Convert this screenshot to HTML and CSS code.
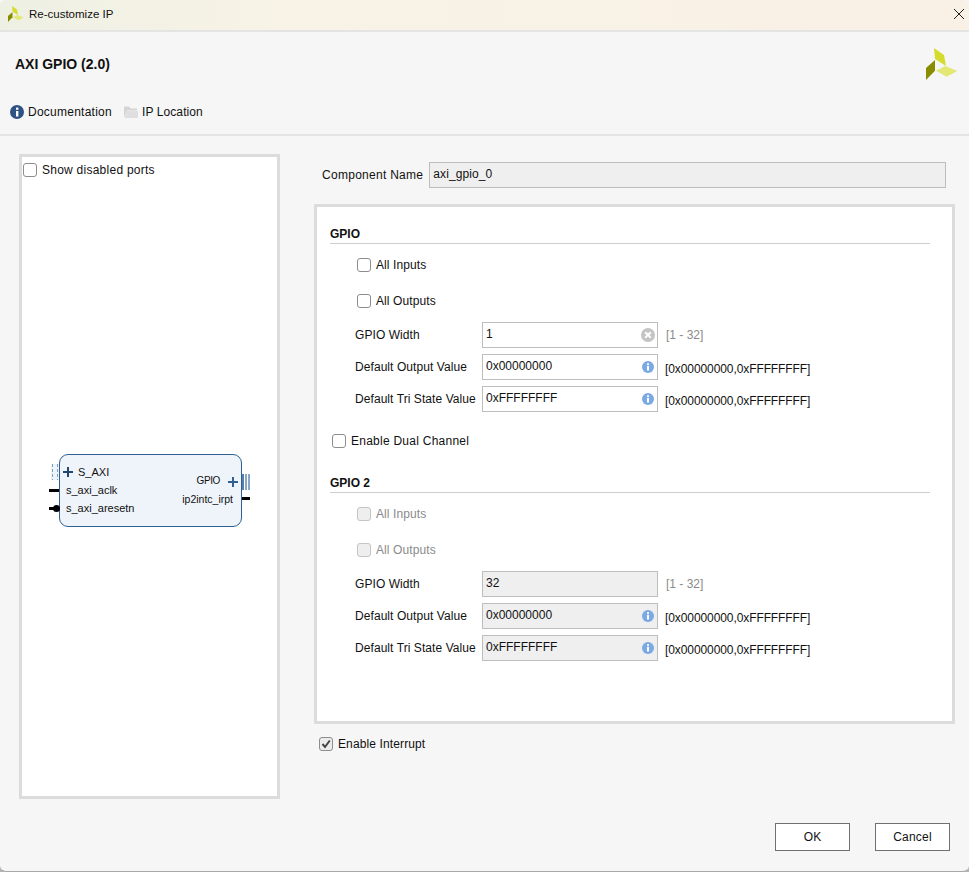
FILE: index.html
```html
<!DOCTYPE html>
<html lang="en">
<head>
<meta charset="utf-8">
<title>Re-customize IP</title>
<link rel="stylesheet" href="styles.css">
</head>
<body>
<div class="dialog">
  <header class="titlebar">
    <svg class="logo-small" viewBox="0 0 32 32"><path d="M8 0 18 7 20 18 9 11Z" fill="#d6dc2e"/><path d="M9 12 9 22.700 0 32 0 20Z" fill="#8a8c00"/><path d="M10 22.700 19.300 18 31.300 23 20.700 28.700Z" fill="#e3e874"/></svg>
    <span class="titlebar-text">Re-customize IP</span>
    <svg class="close" viewBox="0 0 10 10"><path d="M0 0 10 10M10 0 0 10" stroke="#222" stroke-width="1" fill="none"/></svg>
  </header>
  <section class="head">
    <div class="head-top">
      <h1 class="ip-title">AXI GPIO (2.0)</h1>
      <svg class="logo" viewBox="0 0 32 32"><path d="M8 0 18 7 20 18 9 11Z" fill="#d6dc2e"/><path d="M9 12 9 22.700 0 32 0 20Z" fill="#8a8c00"/><path d="M10 22.700 19.300 18 31.300 23 20.700 28.700Z" fill="#e3e874"/></svg>
    </div>
    <nav class="tools">
      <span class="tool">
        <svg class="tool-icon" viewBox="0 0 14 14"><circle cx="7" cy="7" r="7" fill="#2f5184"/><rect x="6" y="6" width="2.400" height="5.500" fill="#fff"/><rect x="6" y="2.600" width="2.400" height="2.200" fill="#fff"/></svg>
        <span class="doc-text">Documentation</span>
      </span>
      <span class="tool">
        <svg class="tool-icon" viewBox="0 0 14 13"><path d="M0 1H5L6.500 3H13V5H3L0 12Z" fill="#d4d4d4"/><path d="M2.500 5.500H14V12.500H0.500Z" fill="#dfdfdf"/></svg>
        <span class="loc-text">IP Location</span>
      </span>
    </nav>
  </section>
  <main class="main">
    <aside class="symbol-panel">
      <label class="check show-ports"><span class="box"></span>Show disabled ports</label>
      <div class="canvas">
        <div class="ip-block"></div>
        <svg class="stub stub-bus-left" viewBox="0 0 8 16"><path d="M1.500 0V16M6.500 0V16" stroke="#7fa1c1" stroke-width="1" stroke-dasharray="3 2" fill="none"/></svg>
        <span class="port-line port-aclk"></span>
        <span class="port-line port-aresetn"></span>
        <span class="port-dot"></span>
        <span class="port-line port-irq"></span>
        <svg class="stub stub-bus-right" viewBox="0 0 8 16"><path d="M1 0V16" stroke="#2f5f93" stroke-width="1.600"/><path d="M4 0V16M7 0V16" stroke="#5f8db5" stroke-width="1.500"/></svg>
        <svg class="plus plus-left" viewBox="0 0 10 10"><path d="M5 0V10M0 5H10" stroke="#23466f" stroke-width="2"/></svg>
        <svg class="plus plus-right" viewBox="0 0 10 10"><path d="M5 0V10M0 5H10" stroke="#2f5f93" stroke-width="2"/></svg>
        <span class="pin pin-saxi">S_AXI</span>
        <span class="pin pin-aclk">s_axi_aclk</span>
        <span class="pin pin-aresetn">s_axi_aresetn</span>
        <span class="pin pin-gpio">GPIO</span>
        <span class="pin pin-irpt">ip2intc_irpt</span>
      </div>
    </aside>
    <div class="config">
      <div class="name-row">
        <span class="name-label">Component Name</span>
        <div class="field name-field">axi_gpio_0</div>
      </div>
      <div class="form-panel">
        <section class="group">
          <h2 class="group-title">GPIO</h2>
          <label class="check check-row first"><span class="box"></span>All Inputs</label>
          <label class="check check-row"><span class="box"></span>All Outputs</label>
          <div class="param first-param">
            <span class="param-label">GPIO Width</span>
            <div class="field"><span>1</span><svg class="field-icon" viewBox="0 0 14 14"><circle cx="7" cy="7" r="7" fill="#c4c4c4"/><path d="M4.200 4.200 9.800 9.800M9.800 4.200 4.200 9.800" stroke="#fff" stroke-width="2"/></svg></div>
            <span class="range muted">[1 - 32]</span>
          </div>
          <div class="param">
            <span class="param-label">Default Output Value</span>
            <div class="field"><span>0x00000000</span><svg class="field-icon info" viewBox="0 0 12 12"><circle cx="6" cy="6" r="6" fill="#7aa9e4"/><rect x="5" y="5" width="2" height="4.500" fill="#fff"/><rect x="5" y="2.300" width="2" height="1.800" fill="#fff"/></svg></div>
            <span class="range low">[0x00000000,0xFFFFFFFF]</span>
          </div>
          <div class="param">
            <span class="param-label">Default Tri State Value</span>
            <div class="field"><span>0xFFFFFFFF</span><svg class="field-icon info" viewBox="0 0 12 12"><circle cx="6" cy="6" r="6" fill="#7aa9e4"/><rect x="5" y="5" width="2" height="4.500" fill="#fff"/><rect x="5" y="2.300" width="2" height="1.800" fill="#fff"/></svg></div>
            <span class="range low">[0x00000000,0xFFFFFFFF]</span>
          </div>
        </section>
        <label class="check dual"><span class="box"></span>Enable Dual Channel</label>
        <section class="group second">
          <h2 class="group-title">GPIO 2</h2>
          <label class="check check-row first disabled"><span class="box"></span>All Inputs</label>
          <label class="check check-row disabled"><span class="box"></span>All Outputs</label>
          <div class="param first-param">
            <span class="param-label">GPIO Width</span>
            <div class="field off"><span>32</span></div>
            <span class="range muted">[1 - 32]</span>
          </div>
          <div class="param">
            <span class="param-label">Default Output Value</span>
            <div class="field off"><span>0x00000000</span><svg class="field-icon info" viewBox="0 0 12 12"><circle cx="6" cy="6" r="6" fill="#7aa9e4"/><rect x="5" y="5" width="2" height="4.500" fill="#fff"/><rect x="5" y="2.300" width="2" height="1.800" fill="#fff"/></svg></div>
            <span class="range low">[0x00000000,0xFFFFFFFF]</span>
          </div>
          <div class="param">
            <span class="param-label">Default Tri State Value</span>
            <div class="field off"><span>0xFFFFFFFF</span><svg class="field-icon info" viewBox="0 0 12 12"><circle cx="6" cy="6" r="6" fill="#7aa9e4"/><rect x="5" y="5" width="2" height="4.500" fill="#fff"/><rect x="5" y="2.300" width="2" height="1.800" fill="#fff"/></svg></div>
            <span class="range low">[0x00000000,0xFFFFFFFF]</span>
          </div>
        </section>
      </div>
      <label class="check interrupt"><span class="box checked"><svg viewBox="0 0 10 10"><path d="M1.500 5 4 8 8.800 1.500" stroke="#444" stroke-width="2" fill="none"/></svg></span>Enable Interrupt</label>
    </div>
  </main>
  <footer class="actions">
    <button class="btn" type="button">OK</button>
    <button class="btn" type="button">Cancel</button>
  </footer>
</div>
</body>
</html>
```
FILE: styles.css
```css
* { box-sizing: border-box; }
html, body { margin: 0; padding: 0; height: 100%; background: #b4b4b4; overflow: hidden; }
body { font: 12px "Liberation Sans", Arial, sans-serif; color: #111; }
.dialog { width: 969px; height: 872px; display: flex; flex-direction: column; background: #f6f6f6; border-bottom: 1px solid #a8a8a8; border-radius: 0 0 6px 6px; }

.titlebar { height: 32px; flex: none; display: flex; align-items: center; padding: 0 5px 2px 8px; border-bottom: 2px solid #e4e4e4; border-radius: 6px 6px 0 0; background: linear-gradient(90deg, #eef0e4 0%, #f8f3e6 30%, #f9f0e6 100%); }
.logo-small { width: 16px; height: 16px; margin-right: 5px; }
.titlebar-text { flex: 1; font-size: 11.5px; }
.close { width: 10px; height: 10px; }

.head { height: 104px; flex: none; border-bottom: 2px solid #e4e4e4; display: flex; flex-direction: column; }
.head-top { height: 72px; display: flex; justify-content: space-between; align-items: flex-start; padding: 16px 11px 0 15px; }
.ip-title { margin: 8px 0 0; font-size: 14px; font-weight: bold; line-height: 16px; }
.logo { width: 32px; height: 32px; }
.tools { display: flex; gap: 12px; padding-left: 10px; line-height: 16px; }
.tool { display: flex; align-items: center; gap: 4px; }
.tool-icon { width: 14px; height: 14px; }
.doc-text { letter-spacing: .25px; }
.loc-text { letter-spacing: .1px; }

.main { flex: 1; display: flex; padding: 18px 14px 0 19px; min-height: 0; }
.symbol-panel { width: 261px; height: 645px; border: 3px solid #dcdcdc; background: #fff; display: flex; flex-direction: column; padding: 5px 0 0 1px; }
.check { display: flex; align-items: center; gap: 5px; line-height: 16px; }
.show-ports { letter-spacing: .25px; }
.box { width: 14px; height: 14px; border: 1.500px solid #8d8d8d; border-radius: 3px; background: #fff; display: flex; align-items: center; justify-content: center; flex: none; }
.box svg { width: 10px; height: 10px; }
.box.checked { background: #ececec; }
.disabled { color: #8a8a8a; }
.disabled .box { border-color: #c4c4c4; background: #eeeeee; }

.canvas { position: relative; flex: 1; }
.ip-block { position: absolute; left: 36px; top: 276px; width: 183px; height: 73px; background: #eff4fa; border: 1px solid #2f5f93; border-radius: 9px; }
.stub { position: absolute; }
.stub-bus-left { left: 28px; top: 286px; width: 8px; height: 16px; background: #eef3fa; }
.stub-bus-right { left: 219px; top: 296px; width: 8px; height: 16px; }
.port-line { position: absolute; height: 3px; background: #000; width: 10px; }
.port-aclk { left: 26px; top: 311px; }
.port-aresetn { left: 26px; top: 329px; width: 6px; }
.port-dot { position: absolute; left: 30px; top: 327px; width: 7px; height: 7px; border-radius: 50%; background: #000; }
.port-irq { left: 219px; top: 319px; width: 8px; }
.plus { position: absolute; width: 10px; height: 10px; }
.plus-left { left: 40px; top: 289px; }
.plus-right { left: 205px; top: 299px; }
.pin { position: absolute; font-size: 11px; line-height: 14px; white-space: nowrap; }
.pin-saxi { left: 55px; top: 287px; }
.pin-aclk { left: 43px; top: 305px; }
.pin-aresetn { left: 43px; top: 323px; }
.pin-gpio { right: 57px; top: 296px; font-size: 10px; letter-spacing: -.4px; }
.pin-irpt { right: 44px; top: 314px; font-size: 10.5px; }

.config { margin-left: 34px; width: 641px; display: flex; flex-direction: column; }
.name-row { display: flex; align-items: center; padding: 8px 9px 0 8px; gap: 6px; }
.name-label { flex: none; letter-spacing: .28px; }
.field { width: 176px; height: 26px; border: 1px solid #bdbdbd; background: #fff; display: flex; align-items: center; justify-content: space-between; padding: 0 3px 2px 3px; flex: none; }
.name-field { flex: 1; background: #efefef; letter-spacing: .1px; }
.form-panel { margin-top: 16px; height: 520px; border: 3px solid #dcdcdc; background: #fff; padding: 19px 22px 0 13px; }
.group-title { margin: 0; font-size: 12px; font-weight: bold; line-height: 16px; border-bottom: 1px solid #cfcfcf; height: 18px; }
.check-row { margin-left: 27px; height: 16px; margin-top: 20px; letter-spacing: .1px; }
.check-row.first { margin-top: 13px; }
.param { display: flex; align-items: center; margin-left: 25px; margin-top: 6px; height: 26px; }
.first-param { margin-top: 13px; }
.param-label { width: 127px; flex: none; letter-spacing: .07px; }
.range { margin-left: 8px; white-space: nowrap; }
.range.low { padding-top: 3px; margin-left: 7px; letter-spacing: -.09px; }
.muted { color: #8a8a8a; }
.field-icon { width: 14px; height: 14px; margin-top: 2px; margin-right: -1px; }
.field-icon.info { width: 12px; height: 12px; margin-right: 0; }
.off { background: #efefef; }
.dual { margin: 21px 0 0 2px; letter-spacing: .25px; }
.second { margin-top: 26px; }
.interrupt { margin: 12px 0 0 5px; letter-spacing: .12px; }

.actions { flex: none; height: 48px; display: flex; justify-content: flex-end; gap: 25px; padding-right: 19px; }
.btn { width: 75px; height: 28px; background: #fff; border: 1px solid #707070; font: 12px "Liberation Sans", Arial, sans-serif; letter-spacing: .2px; color: #111; padding: 0; }
```
